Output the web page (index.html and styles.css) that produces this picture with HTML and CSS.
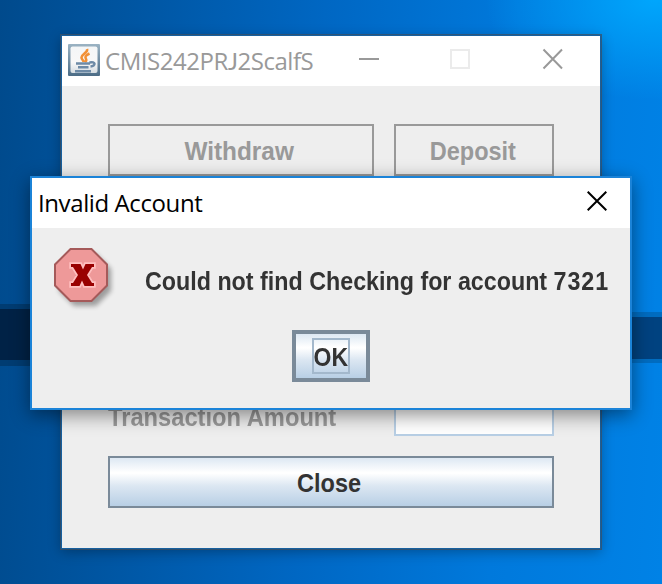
FILE: index.html
```
<!DOCTYPE html>
<html lang="en">
<head>
<meta charset="utf-8">
<title>CMIS242PRJ2ScalfS</title>
<link rel="stylesheet" href="styles.css">
</head>
<body>
<main class="desktop">
  <svg class="wallpaper" viewBox="0 0 662 584" aria-hidden="true">
    <path d="M0 304H40V366H0Z" fill="#003c72"/>
    <path d="M0 309H40V360H0Z" fill="#002246"/>
    <path d="M620 312H662V363H620Z" fill="#006cc0"/>
    <path d="M620 317H662V359H620Z" fill="#004280"/>
  </svg>
  <section class="window">
    <header class="titlebar">
      <svg class="java-icon" viewBox="0 0 32 32" aria-hidden="true">
        <defs>
          <linearGradient id="frame" x1="0" y1="0" x2="0" y2="1"><stop offset="0" stop-color="#9bb3c3"/><stop offset="1" stop-color="#4c6c86"/></linearGradient>
          <linearGradient id="face" x1="0" y1="0" x2="0" y2="1"><stop offset="0" stop-color="#f4f6f7"/><stop offset=".6" stop-color="#f8f8f8"/><stop offset="1" stop-color="#d5dce1"/></linearGradient>
        </defs>
        <rect width="32" height="32" rx="1" fill="url(#frame)"/>
        <rect x="2.5" y="2.5" width="27" height="26.5" rx="2" fill="url(#face)"/>
        <path d="M19 5c1.500 3.500-5.500 5-5.500 8.500 0 2 2 2.500 2 4.500M21.500 9.500c-4.500 2-4.500 3.500-3.500 5.500.5 1 .3 2-1 3" fill="none" stroke="#f29137" stroke-width="2.600"/>
        <path d="M8 19.500h14M10 23.300h10.500M7 27.300h16M21.500 18.500c6.500-1.500 6.500 3.500 1 4" fill="none" stroke="#6d8aa6" stroke-width="2.500"/>
      </svg>
      <h1 class="title title-main"><span>CMIS242PR<b>J</b>2ScalfS</span></h1>
      <svg class="controls" viewBox="0 0 206 24" aria-hidden="true">
        <path d="M0 12H20" stroke="#999" stroke-width="2"/>
        <rect x="92" y="3" width="18" height="18" fill="none" stroke="#ebebeb" stroke-width="2"/>
        <path d="M184.500 2.500L203 21.500M203 2.500L184.500 21.500" stroke="#999" stroke-width="2"/>
      </svg>
    </header>
    <div class="form">
      <button class="btn disabled" disabled><span class="t-withdraw">Withdraw</span></button>
      <button class="btn disabled" disabled><span class="t-deposit">Deposit</span></button>
      <label class="amount-label" for="amount"><span>Transaction Amount</span></label>
      <input class="amount" id="amount" type="text">
      <button class="btn wide"><span class="t-close">Close</span></button>
    </div>
  </section>
  <section class="dialog" role="alertdialog">
    <header class="titlebar">
      <h2 class="title title-dialog"><span>Invalid Account</span></h2>
      <svg class="dialog-close" viewBox="0 0 20 20" aria-hidden="true"><path d="M.7 .7L19.300 19.300M19.300 .7L.7 19.300" stroke="#000" stroke-width="2"/></svg>
    </header>
    <div class="message">
      <svg class="error-icon" viewBox="0 0 64 64" aria-hidden="true">
        <defs><filter id="soft" x="-20%" y="-20%" width="140%" height="140%"><feGaussianBlur stdDeviation="2.500"/></filter></defs>
        <path d="M20 6H42L57 21V43L42 58H20L5 43V21Z" fill="#000" opacity=".34" filter="url(#soft)"/>
        <path d="M16.500 1H37.500L53 16.500V37.500L37.500 53H16.500L1 37.500V16.500Z" fill="#ee9999" stroke="#a55a5a" stroke-width="2"/>
        <path d="M17 16H26.500L29 21.500L31.500 16H40V19H38L33 27L38 35H40V38H30.500L28 32.500L25.500 38H17V35H19L24 27L19 19H17Z" fill="#990000" stroke="#ffbfbf" stroke-width="3.500" paint-order="stroke"/>
      </svg>
      <p><span>Could not find Checking for account <span class="digits">7321</span></span></p>
    </div>
    <button class="btn ok"><span class="focus"><span>OK</span></span></button>
  </section>
</main>
</body>
</html>
```

FILE: styles.css
```
* { box-sizing: border-box; }
body { margin: 0; font-family: "Liberation Sans", sans-serif; }
.desktop {
  position: relative;
  width: 662px;
  height: 584px;
  overflow: hidden;
  background:
    radial-gradient(ellipse 170px 100px at 655px 0, rgba(0,170,255,.9), rgba(0,150,245,0)),
    linear-gradient(93deg, #004a8c 0%, #0056a3 20%, #0067c3 47%, #0079dc 75%, #0082e6 100%);
}
.wallpaper { position: absolute; inset: 0; width: 662px; height: 584px; }
.window {
  position: absolute;
  left: 61px;
  top: 35px;
  width: 540px;
  height: 514px;
  border: 1px solid #17609f;
  background: #eee;
  box-shadow: 0 0 0 1px rgba(60,80,100,.75), 0 3px 12px rgba(0,0,0,.3);
}
.dialog {
  position: absolute;
  left: 30px;
  top: 176px;
  width: 602px;
  height: 234px;
  border: 2px solid #1b83d8;
  background: #eee;
  box-shadow: 0 5px 18px rgba(0,0,0,.45);
  display: flex;
  flex-direction: column;
}
.titlebar { height: 50px; background: #fff; display: flex; align-items: center; flex: none; }
.java-icon { width: 32px; height: 32px; margin: -2px 0 0 6px; flex: none; }
.title { margin: 0; font: 400 24px/32px "Open Sans", sans-serif; white-space: nowrap; }
.title-main { width: 254px; margin-left: 5px; color: #999; }
.title-dialog { width: 549px; padding-left: 6px; color: #000; }
.title span, .btn span, .amount-label span, .message p span { display: inline-block; }
.title-main span { letter-spacing: -.45px; }
.title-main b { font: 400 23.500px/1 Lato, sans-serif; }
.title-dialog span { letter-spacing: -.4px; }
.controls { width: 206px; height: 24px; margin-top: -4px; flex: none; }
.dialog-close { width: 20px; height: 20px; margin: -4px 0 0 6px; flex: none; }
.form {
  display: grid;
  grid-template-columns: 266px 160px;
  grid-template-rows: 52px 224px 36px 20px 52px;
  column-gap: 20px;
  padding: 38px 46px;
}
.btn {
  padding: 0;
  border: 2px solid #7a8a99;
  background: linear-gradient(#dde8f3 0%, #fff 30%, #fff 32%, #dce7f2 58%, #b8cfe5 100%);
  font: 700 25px/28px "Liberation Sans", sans-serif;
  color: #333;
  white-space: nowrap;
}
.disabled { padding-top: 2px; border-color: #999; background: #eee; color: #999; }
.btn .t-withdraw { transform: translateX(-2px) scaleX(.975); }
.btn .t-deposit { transform: translateX(-1px) scaleX(.94); }
.btn .t-close { transform: translateX(-2px) scaleX(.94); }
.wide { grid-area: 5 / 1 / 6 / 3; padding-top: 2px; }
.amount-label {
  grid-area: 2 / 1 / 4 / 2;
  align-self: end;
  height: 33px;
  font: 700 25px/28px "Liberation Sans", sans-serif;
  color: #999;
  white-space: nowrap;
}
.amount-label span { transform: scaleX(.948); transform-origin: 0 50%; }
.amount {
  grid-area: 2 / 2 / 4 / 3;
  align-self: end;
  width: 160px;
  height: 40px;
  border: 2px solid #b8cfe5;
  background: #fff;
}
.message { display: flex; height: 102px; padding: 20px 0 0 22px; flex: none; }
.error-icon { width: 64px; height: 64px; flex: none; }
.message p {
  width: 464px;
  margin: 19px 0 0 27px;
  font: 700 25px/28px "Liberation Sans", sans-serif;
  color: #333;
  white-space: nowrap;
}
.message p > span { transform: scaleX(.931); transform-origin: 0 50%; }
.message p .digits { letter-spacing: 1px; }
.ok { width: 78px; height: 52px; border-width: 4px; align-self: center; display: flex; justify-content: center; align-items: center; }
.focus { width: 38px; height: 36px; border: 2px solid #a3b8cc; line-height: 34px; }
.focus span { margin: 0 -4px; transform: scaleX(.92); }
```
